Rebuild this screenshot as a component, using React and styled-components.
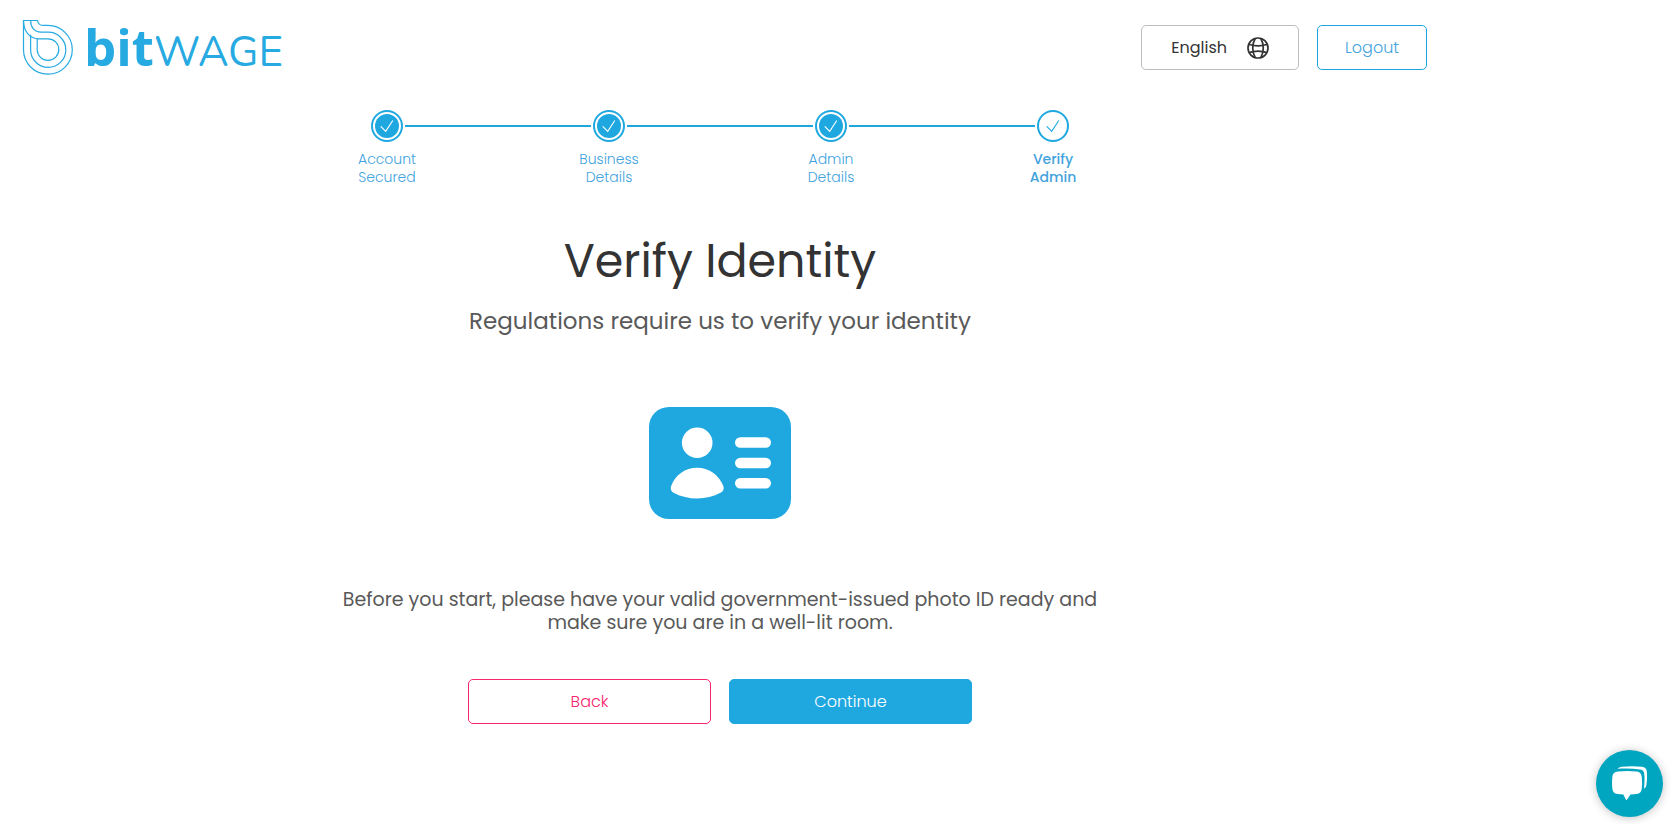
import React from 'react';
import styled, { createGlobalStyle } from 'styled-components';

const blue = '#1fa8e0';
const pink = '#f9256e';

const GlobalStyle = createGlobalStyle`
    *, *::before, *::after {
        box-sizing: border-box;
    }

    body {
        margin: 0;
        background: #fff;
        color: #333;
        font-family: Poppins, Inter, "Liberation Sans", sans-serif;
        font-size: 16px;
    }
`;

const Page = styled.div`
    max-width: 1440px;
`;

const Header = styled.header`
    display: flex;
    align-items: center;
    justify-content: space-between;
    padding: 16px 13px 0 22px;
`;

const Logo = styled.a`
    display: flex;
    align-items: center;
    gap: 10px;
    color: #27aae1;
    text-decoration: none;
`;

const LogoText = styled.span`
    display: flex;
    align-items: baseline;
    padding-top: 4px;
    font-family: Nunito, Lato, "Open Sans", sans-serif;
    font-size: 42px;
    line-height: 52px;
`;

const LogoBold = styled.span`
    font-family: "Open Sans", Lato, sans-serif;
    font-weight: 700;
    font-size: 51px;
`;

const HeaderActions = styled.div`
    display: flex;
    gap: 18px;
`;

const Button = styled.button`
    display: inline-flex;
    align-items: center;
    justify-content: center;
    height: 45px;
    padding: 0 27px;
    border: 1px solid ${props => props.$color};
    border-radius: 5px;
    background: ${props => (props.$filled ? props.$color : '#fff')};
    color: ${props => (props.$filled ? '#fff' : props.$text || props.$color)};
    font-family: inherit;
    font-size: 16px;
    font-weight: 300;
    cursor: pointer;
`;

const LanguageButton = styled(Button)`
    gap: 20px;
    padding: 0 29px;
    font-weight: 400;
`;

const Main = styled.main`
    display: flex;
    flex-direction: column;
    align-items: center;
    padding: 31px 24px 48px;
`;

const Steps = styled.ol`
    display: flex;
    width: 100%;
    max-width: 888px;
    margin: 0;
    padding: 0;
    list-style: none;
`;

const Step = styled.li`
    flex: 1;
    color: #43a3dd;
    font-size: 14px;
    font-weight: ${props => (props.$current ? 500 : 300)};
    line-height: 18px;
    text-align: center;
`;

const StepTrack = styled.div`
    display: flex;
    align-items: center;
    gap: 2px;
    margin-bottom: 8px;
`;

const StepLine = styled.span`
    flex: 1;
    height: 2px;
    background: ${props => (props.$hidden ? 'transparent' : blue)};
`;

const StepCircle = styled.span`
    display: flex;
    width: 32px;
    height: 32px;
    padding: 2px;
    border: 2px solid ${blue};
    border-radius: 50%;
    color: ${props => (props.$current ? blue : '#fff')};

    svg {
        border-radius: 50%;
        background: ${props => (props.$current ? '#fff' : blue)};
    }
`;

const StepLabel = styled.span`
    display: block;
    width: min-content;
    margin: 0 auto;
`;

const Title = styled.h1`
    margin: 45px 0 0;
    font-size: 46px;
    font-weight: 400;
    line-height: 60px;
`;

const Subtitle = styled.p`
    margin: 15px 0 0;
    color: #595959;
    font-size: 23px;
    line-height: 30px;
`;

const IdCard = styled.svg`
    margin: 71px 0 69px;
`;

const Note = styled.p`
    max-width: 800px;
    margin: 0;
    color: #595959;
    font-size: 19px;
    line-height: 23px;
    text-align: center;
`;

const Actions = styled.div`
    display: grid;
    grid-template-columns: 1fr 1fr;
    gap: 18px;
    width: 100%;
    max-width: 504px;
    margin-top: 45px;
`;

const ChatButton = styled.button`
    position: fixed;
    right: 13px;
    bottom: 7px;
    width: 67px;
    height: 67px;
    padding: 0;
    border: 0;
    border-radius: 50%;
    background: #00a5bf;
    box-shadow: 0 1px 10px rgba(0, 0, 0, 0.24);
    cursor: pointer;

    svg {
        display: block;
    }
`;

const LogoMark = () => (
    <svg width="52" height="58" viewBox="22 19 52 58" fill="none" stroke="currentColor" strokeWidth="1.2" aria-hidden="true">
        <path d="M23.5 20.5H37.5C38 23.2 40 25.4 43 25.4H48A24.4 24.4 0 1 1 23.5 49.8Z" />
        <path d="M30.6 20.5C30.6 27.5 34.5 32.2 41 32.2H48A17.6 17.6 0 1 1 30.6 49.8V34.8" />
        <path d="M23.5 20.5C23.5 31 29.5 38.8 39 38.8H48A10.8 10.8 0 1 1 37.2 49.8V38.6" />
    </svg>
)

const Globe = () => (
    <svg width="22" height="22" viewBox="0 0 22 22" fill="none" stroke="#333" strokeWidth="1.7" aria-hidden="true">
        <circle cx="11" cy="11" r="10" />
        <path d="M8.2 1.5C4.9 7 4.9 15 8.2 20.5M13.8 1.5C17.1 7 17.1 15 13.8 20.5" />
        <path d="M1.8 7.2C7.4 9.3 14.6 9.3 20.2 7.2M1.8 15.6C7.4 13.7 14.6 13.7 20.2 15.6" />
    </svg>
)

const Check = () => (
    <svg width="24" height="24" viewBox="0 0 24 24" fill="none" stroke="currentColor" strokeWidth="1.1" aria-hidden="true">
        <path d="M5.7 12.3L10.7 17.3L17.8 6.5" />
    </svg>
)

const ChatIcon = () => (
    <svg width="67" height="67" viewBox="0 0 67 67" fill="#fff" aria-hidden="true">
        <path d="M21.5 18.8C22.5 17.5 24 16.9 26 16.7C32 16 40 16 46 16.7C49 17 50.5 18.5 50.8 21.5C51.3 26.5 51 31 50.3 35.5C50 37 49.3 38 48 38.5C48.6 33 48.8 28 48.2 23.5C47.9 21 46.8 19.8 44.3 19.4C37 18.5 29 18.4 21.5 18.8Z" />
        <path d="M22 21.4C28.5 20.7 34 20.7 40.5 21.4C43.8 21.8 45.3 23.4 45.7 26.5C46.2 31 46.2 34.5 45.7 39C45.3 42.2 43.8 43.6 40.5 44L34.5 44.5L30.9 49.7C30.7 50 30.2 50 30 49.7L27.3 44.5L21.5 44C18.2 43.6 16.8 42.2 16.4 39C15.9 34.5 15.9 31 16.4 26.5C16.8 23.4 18.5 21.8 22 21.4Z" />
    </svg>
)

const steps = [
    'Account Secured',
    'Business Details',
    'Admin Details',
    'Verify Admin',
];

const App = () => (
    <>
        <GlobalStyle />
        <Page>
            <Header>
                <Logo href="#">
                    <LogoMark />
                    <LogoText><LogoBold>bit</LogoBold>WAGE</LogoText>
                </Logo>
                <HeaderActions>
                    <LanguageButton type="button" aria-haspopup="listbox" $color="#bdbdbd" $text="#333">
                        English
                        <Globe />
                    </LanguageButton>
                    <Button type="button" $color={blue} $text="#43a3dd">Logout</Button>
                </HeaderActions>
            </Header>
            <Main>
                <Steps>
                    {steps.map((label, i) => {
                        const current = i === steps.length - 1;
                        return (
                            <Step key={label} $current={current} aria-current={current ? 'step' : undefined}>
                                <StepTrack>
                                    <StepLine $hidden={i === 0} />
                                    <StepCircle $current={current}><Check /></StepCircle>
                                    <StepLine $hidden={current} />
                                </StepTrack>
                                <StepLabel>{label}</StepLabel>
                            </Step>
                        );
                    })}
                </Steps>
                <Title>Verify Identity</Title>
                <Subtitle>Regulations require us to verify your identity</Subtitle>
                <IdCard width="142" height="112" viewBox="0 0 142 112" fill="#fff" aria-hidden="true">
                    <rect width="142" height="112" rx="20" fill={blue} />
                    <circle cx="48.2" cy="35.8" r="15.3" />
                    <path d="M22.3 78.5C26.5 68 36 60.7 48.3 60.7C60.5 60.7 70.5 68.5 74.5 79.5C75.2 82.5 74 84.5 71.5 85.8C64.5 89.6 56.5 91.5 48.3 91.5C40 91.5 32 89.6 25 86C22 84.4 21 82 22.3 78.5Z" />
                    <rect x="86" y="30.2" width="36" height="10.6" rx="5.3" />
                    <rect x="86" y="50.7" width="36" height="10.6" rx="5.3" />
                    <rect x="86" y="71" width="36" height="10.6" rx="5.3" />
                </IdCard>
                <Note>
                    Before you start, please have your valid government-issued photo ID ready and make sure you are in a well-lit room.
                </Note>
                <Actions>
                    <Button type="button" $color={pink}>Back</Button>
                    <Button type="button" $color={blue} $filled>Continue</Button>
                </Actions>
            </Main>
        </Page>
        <ChatButton type="button" aria-label="Open chat">
            <ChatIcon />
        </ChatButton>
    </>
)

export default App
